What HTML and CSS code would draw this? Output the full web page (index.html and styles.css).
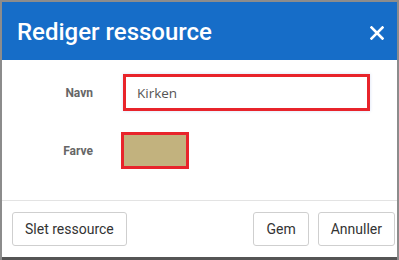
FILE: index.html
```html
<!DOCTYPE html>
<html lang="da">
<head>
    <meta charset="UTF-8">
    <meta name="viewport" content="width=device-width, initial-scale=1.0">
    <title>Rediger ressource</title>
    <link rel="stylesheet" href="styles.css">
</head>
<body>
    <div class="modal">
        <!-- header -->
        <div class="modal-header">
            <h1>Rediger ressource</h1>
            <button class="close-btn" aria-label="Luk">
                <svg width="14" height="14" viewBox="0 0 14 14">
                    <path d="M1.5 1.5 L12.5 12.5 M12.5 1.5 L1.5 12.5" stroke="#fff" stroke-width="2.6" stroke-linecap="square"/>
                </svg>
            </button>
        </div>

        <div class="modal-body">
            <label class="field-label" for="navn">Navn</label>
            <input class="name-input" id="navn" type="text" value="Kirken">

            <span class="field-label">Farve</span>
            <div class="color-swatch"></div>
        </div>

        <div class="modal-footer">
            <button class="btn">Slet ressource</button>
            <div class="right-buttons">
                <button class="btn">Gem</button>
                <button class="btn">Annuller</button>
            </div>
        </div>
    </div>
</body>
</html>
```

FILE: styles.css
```css
body {
    margin: 0;
    background: #8c8c8c;
    font-family: Roboto, "Liberation Sans", Arial, sans-serif;
    height: 260px;
    overflow: hidden;
}

.modal {
    margin: 2px 2px 0 2px;
    width: 395px;
    height: 255px;
    background: #ffffff;
    box-shadow: 0 3px 0 #555;
    display: flex;
    flex-direction: column;
}

/* header */
.modal-header {
    background: #166dc8;
    height: 58px;
    display: flex;
    align-items: center;
    justify-content: space-between;
    padding: 0 13px 0 15px;
}

.modal-header h1 {
    margin: 0;
    color: #ffffff;
    font-size: 24px;
    font-weight: 500;
    position: relative;
    top: 1px;
}

.close-btn {
    background: none;
    border: none;
    padding: 0;
    width: 14px;
    height: 14px;
    cursor: pointer;
    display: flex;
    margin-top: 4px;
}

/* form */
.modal-body {
    display: grid;
    grid-template-columns: 91px 247px;
    grid-template-rows: 37px 37px;
    column-gap: 30px;
    row-gap: 21px;
    align-items: center;
    padding-top: 14px;
    height: 126px;
}

.field-label {
    text-align: right;
    font-family: Roboto, sans-serif;
    font-size: 12px;
    font-weight: bold;
    color: #666;
}

.name-input {
    box-sizing: border-box;
    width: 247px;
    height: 37px;
    border: 3px solid #e8242b;
    padding: 0 11px;
    font-family: "Open Sans", sans-serif;
    font-size: 13.5px;
    color: #555;
    outline: none;
    box-shadow: 0 0 3px rgba(90, 130, 220, 0.25);
}

.color-swatch {
    box-sizing: border-box;
    width: 68px;
    height: 37px;
    margin-left: -2px;
    border: 3px solid #e8242b;
    background: #c2b27e;
}

/* footer */
.modal-footer {
    border-top: 1px solid #e3e3e3;
    display: flex;
    justify-content: space-between;
    padding: 11px 2px 0 10px;
}

.right-buttons {
    display: flex;
    gap: 9px;
}

.btn {
    height: 34px;
    padding: 0 12px;
    background: #ffffff;
    border: 1px solid #cfcfcf;
    border-radius: 3px;
    font-family: Roboto, "Liberation Sans", Arial, sans-serif;
    font-size: 14px;
    color: #333;
    cursor: pointer;
}
```
